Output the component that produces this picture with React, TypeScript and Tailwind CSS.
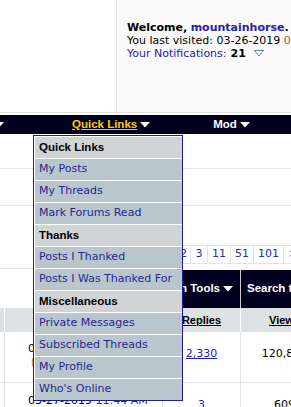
import React from "react";

function Tri({ className = "" }: { className?: string }) {
  return (
    <svg width="10" height="6" viewBox="0 0 10 6" className={"shrink-0 " + className}>
      <polygon points="0,0 10,0 5,5.5" fill="#ffffff" />
    </svg>
  );
}

const menu: { label: string; head?: boolean }[] = [
  { label: "Quick Links", head: true },
  { label: "My Posts" },
  { label: "My Threads" },
  { label: "Mark Forums Read" },
  { label: "Thanks", head: true },
  { label: "Posts I Thanked" },
  { label: "Posts I Was Thanked For" },
  { label: "Miscellaneous", head: true },
  { label: "Private Messages" },
  { label: "Subscribed Threads" },
  { label: "My Profile" },
  { label: "Who's Online" },
];

const pages = [
  { n: "1", w: "w-[17px] border-l" },
  { n: "2", w: "w-[14px]" },
  { n: "3", w: "w-[17px]" },
  { n: "11", w: "w-[23px]" },
  { n: "51", w: "w-[23px]" },
  { n: "101", w: "w-[30px]" },
  { n: ">", w: "w-[20px]" },
];

export default function App() {
  return (
    <div className="relative h-[407px] w-[291px] overflow-hidden bg-white font-['DejaVu_Sans',Verdana,sans-serif] text-[11px] text-black">
      {/* welcome header */}
      <div className="flex h-[113px] border-b border-[#e2e2e2]">
        <div className="w-[117px] shrink-0 border-r border-[#e4e4e4] bg-white" />
        <div className="flex-1 overflow-hidden whitespace-nowrap bg-[#fafafa] pl-[10px] pt-[21px] leading-[13px]">
          <div>
            <b>Welcome,</b> <b className="text-[#2424a6]">mountainhorse</b>
            <b>.</b>
          </div>
          <div>
            You last visited: 03-26-2019 <span className="text-[#e0501a]">06:41 PM</span>
          </div>
          <div className="flex items-center">
            <span className="text-[#2424a6]">Your Notifications:</span>
            <b className="ml-[4px]">21</b>
            <svg width="10" height="7" viewBox="0 0 10 7" className="ml-[8px]">
              <polygon points="0.5,0.5 9.5,0.5 5,6" fill="none" stroke="#6a7bb8" strokeWidth="1" />
            </svg>
          </div>
        </div>
      </div>
      <div className="h-[2px]" />

      {/* navbar */}
      <div className="flex h-[19px] items-center bg-[#01011f] font-['Liberation_Sans',Arial,sans-serif] text-[11.5px] font-bold">
        <Tri className="-ml-[6px]" />
        <span className="ml-[68px] text-[#ffcc00] underline">Quick Links</span>
        <Tri className="ml-[3px]" />
        <span className="ml-[63px] text-white">Mod</span>
        <Tri className="ml-[3px]" />
      </div>

      {/* page behind the menu */}
      <div className="h-[35px] border-b border-[#e6e6e6]" />
      <div className="h-[37px] border-b border-[#e6e6e6]" />
      <div className="h-[39px]" />
      <div className="flex h-[19px]">
        <div className="w-[160px] shrink-0" />
        {pages.map((p) => (
          <div
            key={p.n}
            className={`${p.w} flex shrink-0 items-center justify-center border-y border-r border-[#e3e3e3] text-[#2a2ab8]`}
          >
            {p.n}
          </div>
        ))}
      </div>

      <div className="flex h-[44px]">
        <div className="w-[130px] shrink-0 pt-[4px]">
          <div className="border-t border-[#e3e3e3]" />
        </div>
        <div className="mt-[6px] flex h-[38px] flex-1 bg-[#01011f] font-['Liberation_Sans',Arial,sans-serif] text-[11.5px] font-bold whitespace-nowrap text-white">
          <div className="flex w-[111px] shrink-0 items-center justify-end border-r border-[#c9c9d2] pr-[7px]">
            Admin Tools
            <Tri className="ml-[3px]" />
          </div>
          <div className="flex shrink-0 items-center pl-[6px]">
            Search this Thread
            <Tri className="ml-[3px]" />
          </div>
        </div>
      </div>

      {/* table header */}
      <div className="flex h-[24px] bg-[#dde1e4] font-['Liberation_Sans',Arial,sans-serif] text-[11px] font-bold">
        <div className="w-[5px] shrink-0 border-r border-white" />
        <div className="w-[158px] shrink-0 border-r border-white" />
        <div className="flex w-[78px] shrink-0 items-center justify-center border-r border-white underline">Replies</div>
        <div className="flex w-[87px] shrink-0 items-center justify-center underline">Views</div>
      </div>

      {/* rows */}
      <div className="flex h-[51px] border-b border-[#e3e3e3] whitespace-nowrap leading-[14px]">
        <div className="w-[5px] shrink-0 border-r border-[#e4e4e4]" />
        <div className="w-[158px] shrink-0 border-r border-[#e4e4e4] pl-[23px] pt-[10px]">
          <div>
            03-27-2019 <span className="text-[#2424a6]">12:39 PM</span>
          </div>
          <div className="pl-[3px] text-[#e08a1a]">IronHorse ▸</div>
        </div>
        <div className="flex w-[78px] shrink-0 justify-center border-r border-[#e4e4e4] pt-[15px]">
          <span className="text-[#2020c8] underline">2,330</span>
        </div>
        <div className="flex w-[87px] shrink-0 justify-center pt-[15px]">120,853</div>
      </div>
      <div className="flex h-[60px] whitespace-nowrap leading-[14px]">
        <div className="w-[5px] shrink-0 border-r border-[#e4e4e4]" />
        <div className="w-[158px] shrink-0 border-r border-[#e4e4e4] pl-[23px] pt-[11px]">
          <div>
            03-27-2019 <span className="text-[#2424a6]">11:44 AM</span>
          </div>
        </div>
        <div className="flex w-[78px] shrink-0 justify-center border-r border-[#e4e4e4] pt-[15px]">
          <span className="text-[#2020c8] underline">3</span>
        </div>
        <div className="flex w-[87px] shrink-0 justify-center pt-[15px]">609</div>
      </div>

      {/* quick links dropdown */}
      <div className="absolute left-[33px] top-[135px] flex w-[150px] flex-col gap-px border border-[#1f1f9c] bg-white pl-px pt-px">
        {menu.map((m) =>
          m.head ? (
            <div
              key={m.label}
              className="flex h-[21px] items-center bg-[#d0d4d7] pl-[4px] font-['Liberation_Sans',Arial,sans-serif] text-[11.5px] font-bold text-black"
            >
              {m.label}
            </div>
          ) : (
            <div key={m.label} className="flex h-[21px] items-center bg-[#b9c6ce] pl-[4px] whitespace-nowrap text-[#26268f]">
              {m.label}
            </div>
          )
        )}
      </div>
    </div>
  );
}
